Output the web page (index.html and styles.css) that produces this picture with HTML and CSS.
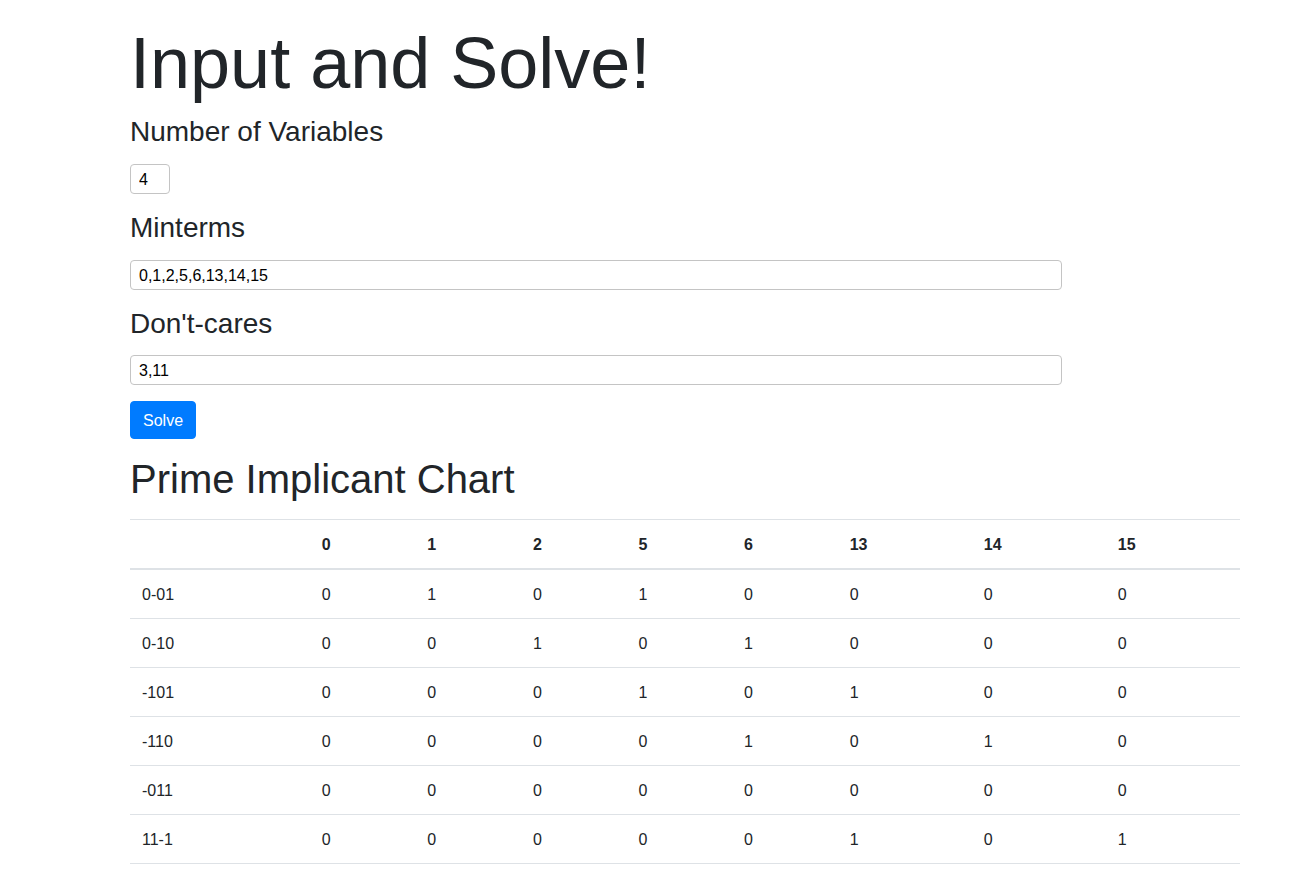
FILE: index.html
```html
<!DOCTYPE html>
<html lang="en">
<head>
<meta charset="utf-8">
<title>Input and Solve!</title>
<link rel="stylesheet" href="styles.css">
</head>
<body>
<main class="page">
  <h1 class="display">Input and Solve!</h1>
  <h3 class="label">Number of Variables</h3>
  <input class="field field-num" type="text" value="4">
  <h3 class="label">Minterms</h3>
  <input class="field field-wide" type="text" value="0,1,2,5,6,13,14,15">
  <h3 class="label">Don't-cares</h3>
  <input class="field field-wide" type="text" value="3,11">
  <button class="btn" type="button">Solve</button>
  <h1 class="section">Prime Implicant Chart</h1>
  <table class="chart">
    <thead>
      <tr><th></th><th>0</th><th>1</th><th>2</th><th>5</th><th>6</th><th>13</th><th>14</th><th>15</th></tr>
    </thead>
    <tbody>
      <tr><td>0-01</td><td>0</td><td>1</td><td>0</td><td>1</td><td>0</td><td>0</td><td>0</td><td>0</td></tr>
      <tr><td>0-10</td><td>0</td><td>0</td><td>1</td><td>0</td><td>1</td><td>0</td><td>0</td><td>0</td></tr>
      <tr><td>-101</td><td>0</td><td>0</td><td>0</td><td>1</td><td>0</td><td>1</td><td>0</td><td>0</td></tr>
      <tr><td>-110</td><td>0</td><td>0</td><td>0</td><td>0</td><td>1</td><td>0</td><td>1</td><td>0</td></tr>
      <tr><td>-011</td><td>0</td><td>0</td><td>0</td><td>0</td><td>0</td><td>0</td><td>0</td><td>0</td></tr>
      <tr><td>11-1</td><td>0</td><td>0</td><td>0</td><td>0</td><td>0</td><td>1</td><td>0</td><td>1</td></tr>
    </tbody>
  </table>
</main>
</body>
</html>
```

FILE: styles.css
```css
html, body {
  margin: 0;
  padding: 0;
  background: #fff;
}
body {
  font-family: "Liberation Sans", Arial, sans-serif;
  font-size: 16px;
  line-height: 1.5;
  color: #212529;
}
.page {
  width: 1110px;
  margin-left: 130px;
  padding-top: 20px;
  display: flex;
  flex-direction: column;
  align-items: flex-start;
}
.display {
  font-size: 72px;
  font-weight: 300;
  line-height: 1.2;
  margin: 0 0 8px 0;
}
.label {
  font-size: 28px;
  font-weight: 500;
  line-height: 1.2;
  padding-top: 1px;
  margin: 0 0 15px 0;
}
.field {
  box-sizing: border-box;
  height: 30px;
  padding: 2px 8px 0 8px;
  border: 1px solid #c4c4c4;
  border-radius: 4px;
  font-family: "Liberation Sans", Arial, sans-serif;
  font-size: 16px;
  color: #000;
  background: #fff;
  margin: 0 0 16px 0;
}
.field-num {
  width: 40px;
}
.field-wide {
  width: 932px;
}
.btn {
  box-sizing: border-box;
  height: 38px;
  padding: 7px 12px 5px 12px;
  border: 1px solid #007bff;
  border-radius: 4px;
  background: #007bff;
  color: #fff;
  font-family: "Liberation Sans", Arial, sans-serif;
  font-size: 16px;
  line-height: 1.5;
  margin: 0 0 16px 0;
  cursor: pointer;
}
.section {
  font-size: 40px;
  font-weight: 500;
  line-height: 1.2;
  margin: 0 0 16px 0;
}
.chart {
  width: 100%;
  border-collapse: collapse;
  color: #212529;
}
.chart th,
.chart td {
  padding: 13px 12px 11px 12px;
  text-align: left;
  vertical-align: top;
  border-top: 1px solid #dee2e6;
  line-height: 1.5;
}
.chart thead th {
  font-weight: 700;
  vertical-align: bottom;
  border-bottom: 2px solid #dee2e6;
}
.chart tbody tr:last-child td {
  border-bottom: 1px solid #dee2e6;
}
```
